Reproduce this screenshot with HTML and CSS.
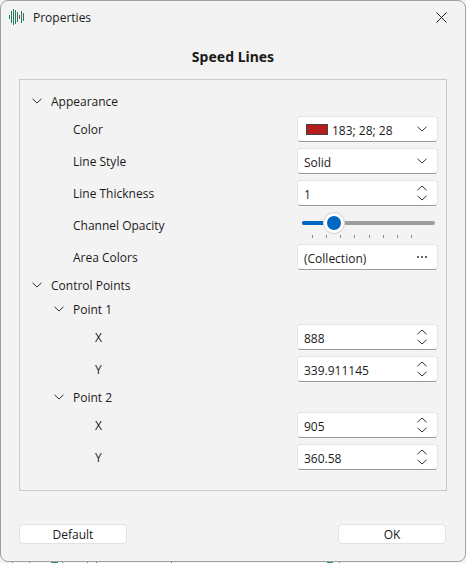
FILE: index.html
```html
<!DOCTYPE html>
<html lang="en">
<head>
<meta charset="utf-8">
<title>Properties</title>
<link rel="stylesheet" href="styles.css">
</head>
<body>
<div class="window">
  <header class="titlebar">
    <svg class="app-icon" width="15" height="16" viewBox="0 0 15 16">
      <path class="bar" d="M.5 6v4M2.500 2v12M4.500 0v16M6.500 1v14M8.500 3v10M12.500 2v12M14.500 4v8"/>
      <path class="bar-red" d="M10.500 6v4"/>
    </svg>
    <span class="window-title">Properties</span>
    <svg class="close" width="11" height="11" viewBox="0 0 11 11"><path d="M.5.500l10 10M10.500.500l-10 10"/></svg>
  </header>
  <h1 class="heading">Speed Lines</h1>
  <section class="panel">
    <div class="row short"><svg class="chev" width="10" height="6" viewBox="0 0 10 6"><path d="M.5.800L5 5l4.500-4.200"/></svg><span>Appearance</span></div>

    <div class="row tall lvl1"><span class="label">Color</span>
      <div class="field"><span class="swatch"></span><span class="val">183; 28; 28</span><svg class="chev drop" width="10" height="6" viewBox="0 0 10 6"><path d="M.5.800L5 5l4.500-4.200"/></svg></div></div>
    <div class="row tall lvl1"><span class="label">Line Style</span>
      <div class="field"><span class="val">Solid</span><svg class="chev drop" width="10" height="6" viewBox="0 0 10 6"><path d="M.5.800L5 5l4.500-4.200"/></svg></div></div>
    <div class="row tall lvl1"><span class="label">Line Thickness</span>
      <div class="field"><span class="val">1</span><span class="spin"><svg width="10" height="6" viewBox="0 0 10 6"><path d="M.5 5.200L5 1l4.500 4.200"/></svg><svg width="10" height="6" viewBox="0 0 10 6"><path d="M.5.800L5 5l4.500-4.200"/></svg></span></div></div>
    <div class="row tall lvl1"><span class="label">Channel Opacity</span>
      <div class="slider">
        <div class="track"><span class="track-on"></span><span class="thumb"></span></div>
        <div class="ticks"><i></i><i></i><i></i><i></i><i></i><i></i><i></i><i></i></div>
      </div></div>
    <div class="row tall lvl1"><span class="label">Area Colors</span>
      <div class="field"><span class="val">(Collection)</span><span class="more"><i></i><i></i><i></i></span></div></div>

    <div class="row short"><svg class="chev" width="10" height="6" viewBox="0 0 10 6"><path d="M.5.800L5 5l4.500-4.200"/></svg><span>Control Points</span></div>
    <div class="row short lvl-sub"><svg class="chev" width="10" height="6" viewBox="0 0 10 6"><path d="M.5.800L5 5l4.500-4.200"/></svg><span>Point 1</span></div>
    <div class="row tall lvl2"><span class="label">X</span>
      <div class="field"><span class="val">888</span><span class="spin"><svg width="10" height="6" viewBox="0 0 10 6"><path d="M.5 5.200L5 1l4.500 4.200"/></svg><svg width="10" height="6" viewBox="0 0 10 6"><path d="M.5.800L5 5l4.500-4.200"/></svg></span></div></div>
    <div class="row tall lvl2"><span class="label">Y</span>
      <div class="field"><span class="val">339.911145</span><span class="spin"><svg width="10" height="6" viewBox="0 0 10 6"><path d="M.5 5.200L5 1l4.500 4.200"/></svg><svg width="10" height="6" viewBox="0 0 10 6"><path d="M.5.800L5 5l4.500-4.200"/></svg></span></div></div>
    <div class="row short lvl-sub"><svg class="chev" width="10" height="6" viewBox="0 0 10 6"><path d="M.5.800L5 5l4.500-4.200"/></svg><span>Point 2</span></div>
    <div class="row tall lvl2"><span class="label">X</span>
      <div class="field"><span class="val">905</span><span class="spin"><svg width="10" height="6" viewBox="0 0 10 6"><path d="M.5 5.200L5 1l4.500 4.200"/></svg><svg width="10" height="6" viewBox="0 0 10 6"><path d="M.5.800L5 5l4.500-4.200"/></svg></span></div></div>
    <div class="row tall lvl2"><span class="label">Y</span>
      <div class="field"><span class="val">360.58</span><span class="spin"><svg width="10" height="6" viewBox="0 0 10 6"><path d="M.5 5.200L5 1l4.500 4.200"/></svg><svg width="10" height="6" viewBox="0 0 10 6"><path d="M.5.800L5 5l4.500-4.200"/></svg></span></div></div>
  </section>
  <footer class="actions">
    <button class="btn" type="button">Default</button>
    <button class="btn" type="button">OK</button>
  </footer>
</div>
<div class="behind"></div>
</body>
</html>
```
FILE: styles.css
```css
* { box-sizing: border-box; }
html, body { margin: 0; padding: 0; }
body {
  width: 466px;
  height: 563px;
  background: #f4f4f4;
  overflow: hidden;
  font-family: "Open Sans", "Noto Sans", sans-serif;
  font-size: 12px;
  color: #1b1b1b;
}
.window {
  width: 466px;
  height: 562px;
  background: #f3f3f3;
  border: 1px solid #a0a0a0;
  border-radius: 8px;
  display: flex;
  flex-direction: column;
  padding: 0 18px;
}
.behind {
  height: 1px;
  background: linear-gradient(90deg,
    #f4f4f4 12px, #c86a6a 12px 13px, #f4f4f4 13px 29px, #c86a6a 29px 30px,
    #f4f4f4 30px 51px, #2f8f6a 51px 58px, #f4f4f4 58px 62px, #2f8f6a 62px 63px,
    #f4f4f4 63px 87px, #c86a6a 87px 88px, #f4f4f4 88px 96px, #2f8f6a 96px 97px,
    #f4f4f4 97px 171px, #2f8f6a 171px 172px, #f4f4f4 172px 327px, #2f8f6a 327px 333px,
    #f4f4f4 333px 339px, #c86a6a 339px 340px, #f4f4f4 340px);
}
.titlebar {
  height: 34px;
  padding-bottom: 2px;
  display: flex;
  align-items: center;
  margin: 0 -10px;
  flex: none;
}
.app-icon { margin-right: 9px; flex: none; }
.app-icon .bar { stroke: #1f7f5c; }
.app-icon .bar-red { stroke: #b03030; }
.window-title { font-size: 12px; }
.close { margin-left: auto; margin-right: 10px; }
.close path { stroke: #1c1c1c; }
.heading {
  margin: 0;
  height: 44px;
  padding-top: 12px;
  text-align: center;
  font-size: 14px;
  line-height: 20px;
  font-weight: 700;
  font-family: "Noto Sans", sans-serif;
}
.panel {
  height: 412px;
  flex: none;
  border: 1px solid #c9c9c9;
  padding: 9px 8px 0 12px;
  display: flex;
  flex-direction: column;
}
.row { display: flex; align-items: center; }
.short { height: 24px; }
.tall { height: 32px; }
.short span { margin-left: 9px; }
.lvl-sub { padding-left: 22px; }
.lvl1 { padding-left: 41px; }
.lvl2 { padding-left: 63px; }
.label { flex: 1; }
svg path { fill: none; stroke: #333; stroke-width: 1; }
.field {
  width: 141px;
  height: 26px;
  flex: none;
  background: #fff;
  border: 1px solid #e6e6e6;
  border-bottom-color: #9c9c9c;
  border-radius: 4px;
  display: flex;
  align-items: center;
  padding: 0 10px 0 6px;
}
.val { flex: 1; padding-top: 2px; }
.swatch {
  width: 22px;
  height: 11px;
  background: #b71c1c;
  border: 1px solid #444;
  margin: 0 4px 0 2px;
  flex: none;
}
.drop { flex: none; }
.spin {
  display: flex;
  flex-direction: column;
  gap: 4px;
  flex: none;
}
.spin svg { display: block; }
.more { display: flex; gap: 2px; }
.more i { width: 2px; height: 2px; background: #333; border-radius: 50%; }
.slider { width: 141px; flex: none; padding: 0 3px 0 5px; align-self: flex-start; }
.track {
  position: relative;
  height: 4px;
  margin-top: 12px;
  border-radius: 2px;
  background: #9d9d9d;
}
.track-on {
  position: absolute;
  left: 0; top: 0;
  width: 29px;
  height: 4px;
  border-radius: 2px;
  background: #0067c0;
}
.thumb {
  position: absolute;
  left: 22px;
  top: -8px;
  width: 20px;
  height: 20px;
  border-radius: 50%;
  background: #0067c0;
  border: 3px solid #fff;
  box-shadow: 0 0 0 1px #d8d8d8;
}
.ticks {
  display: flex;
  justify-content: space-between;
  padding: 0 23px 0 10px;
  margin-top: 10px;
}
.ticks i { width: 1px; height: 3px; background: #8c8c8c; }
.actions {
  display: flex;
  justify-content: space-between;
  margin-top: 33px;
  padding-right: 1px;
}
.btn {
  width: 108px;
  height: 20px;
  padding: 0;
  background: #fff;
  border: 1px solid #e2e2e2;
  border-radius: 4px;
  font: inherit;
  color: inherit;
}
```
